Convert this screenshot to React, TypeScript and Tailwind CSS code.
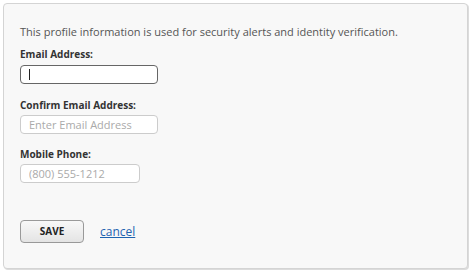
import React from "react";

export default function App() {
  return (
    <div className="w-[474px] h-[274px] bg-white pt-[3px] pl-[3px]" style={{ fontFamily: '"Open Sans", sans-serif' }}>
      <div className="w-[465px] h-[266px] bg-[#f8f8f8] border border-[#d4d4d4] rounded-[4px] shadow-[1px_1px_0_#dcdcdc] pl-[16px] pt-[20px]">
        <p className="text-[11px] leading-[16px] text-[#555]">
          This profile information is used for security alerts and identity verification.
        </p>
        <div className="mt-[7px] flex flex-col">
          <label className="text-[10px] leading-[14px] font-bold text-[#333]">Email Address:</label>
          <div className="mt-[4px] w-[138px] h-[19px] border border-[#666] rounded-[4px] bg-white flex items-center pl-[8px]">
            <div className="w-px h-[11px] bg-[#222]"></div>
          </div>
        </div>
        <div className="mt-[14px] flex flex-col">
          <label className="text-[10px] leading-[14px] font-bold text-[#333]">Confirm Email Address:</label>
          <input
            placeholder="Enter Email Address"
            className="mt-[3px] w-[138px] h-[19px] border border-[#ccc] rounded-[4px] bg-white px-[8px] text-[11px] outline-none placeholder:text-[#aaa]"
          />
        </div>
        <div className="mt-[13px] flex flex-col">
          <label className="text-[10px] leading-[14px] font-bold text-[#333]">Mobile Phone:</label>
          <input
            placeholder="(800) 555-1212"
            className="mt-[3px] w-[120px] h-[19px] border border-[#ccc] rounded-[4px] bg-white px-[8px] text-[11px] outline-none placeholder:text-[#aaa]"
          />
        </div>
        <div className="mt-[37px] flex items-center gap-[16px]">
          <button className="w-[64px] h-[23px] border border-[#999] rounded-[4px] bg-gradient-to-b from-[#f8f8f8] to-[#e4e4e4] text-[10px] font-bold text-[#222]">
            SAVE
          </button>
          <a href="#" className="text-[12px] text-[#1f63b0] underline">cancel</a>
        </div>
      </div>
    </div>
  );
}
